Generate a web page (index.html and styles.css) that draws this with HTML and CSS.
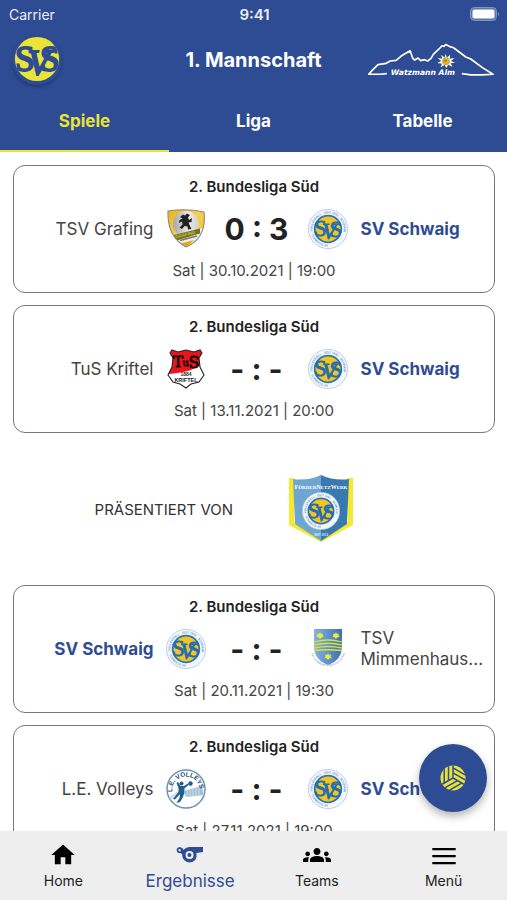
FILE: index.html
```html
<!DOCTYPE html>
<html lang="de">
<head>
<meta charset="utf-8">
<meta name="viewport" content="width=device-width, initial-scale=1">
<title>1. Mannschaft</title>
<link rel="stylesheet" href="styles.css">
</head>
<body>
<svg class="defs" aria-hidden="true">
  <defs>
    <path id="ring" d="M20 35.600A15.600 15.600 0 1 1 20.100 35.600"/>
    <path id="ring-low" d="M3 24A17.500 17.500 0 0 0 37 24"/>
    <path id="volley-arc" d="M6.300 23A13.800 13.800 0 1 1 33.700 23"/>
    <clipPath id="badge-clip"><circle cx="25" cy="25" r="23"/></clipPath>
    <clipPath id="core-clip"><circle cx="20" cy="20" r="14"/></clipPath>
    <clipPath id="ball-clip"><circle r="12.500"/></clipPath>
    <clipPath id="grafing-clip"><path d="M2 2Q20-1 38 3Q41 29 20 38Q1 28 2 2Z"/></clipPath>
    <clipPath id="kriftel-clip"><path d="M6 1L12 3L20 1L28 3L34 1L36 4L33 9L34 18L38 26L33 33L25 35L20 39L14 35L7 33L2 26L6 18L7 9L4 4Z"/></clipPath>
    <linearGradient id="gold" x2="1" y2="1"><stop offset="0" stop-color="#e8b017"/><stop offset=".45" stop-color="#f6d04a"/><stop offset="1" stop-color="#eec020"/></linearGradient>
    <linearGradient id="silver" x2="1"><stop offset="0" stop-color="#a3a6a5"/><stop offset=".6" stop-color="#ececea"/><stop offset="1" stop-color="#cfcfcb"/></linearGradient>
    <linearGradient id="azure" x2="1"><stop offset="0" stop-color="#86b1e3"/><stop offset=".55" stop-color="#5d8dcc"/><stop offset="1" stop-color="#3f6db0"/></linearGradient>
  </defs>
  <symbol id="schwaig" viewBox="0 0 40 40">
    <circle cx="20" cy="20" r="19.600" fill="#f4f8fc" stroke="#a9c5e3" stroke-width=".8"/>
    <text font-family="Liberation Sans" font-weight="700" font-size="3" fill="#5f93c9"><textPath href="#ring">SV SCHWAIG · VOLLEYBALL · SEIT 1961 · SCHWAIG ·</textPath></text>
    <circle cx="20" cy="20" r="13.300" fill="#f5c51c" stroke="#2b74b8" stroke-width="1.800"/>
    <g clip-path="url(#core-clip)" font-family="Liberation Serif" fill="#1f6db5" stroke="#1f6db5" stroke-width=".8">
      <text x="6" y="27" font-size="23">S</text>
      <text x="14" y="30" font-size="23" font-style="italic">V</text>
      <text x="21.500" y="28" font-size="23">S</text>
    </g>
  </symbol>
  <symbol id="grafing" viewBox="0 0 40 40">
    <g clip-path="url(#grafing-clip)">
      <rect width="40" height="40" fill="url(#gold)"/>
      <circle cx="20" cy="15" r="13" fill="url(#silver)"/>
      <path d="M4 30L40 18V40H4Z" fill="#f1f1ed"/>
      <path d="M8 26L34 19.500V24.500L9 32Z" fill="#71701b"/>
      <path d="M12 35L28 31L21 38Z" fill="#e2ad17"/>
      <path d="M14 31.500L31 27" stroke="#77776e" stroke-width="1.400"/>
    </g>
    <path d="M14 8L17 5.500L19 6.500L21 4.500L24 6L22 8.500L23 11L26 9L25.500 13L22.500 13.500L24 17L25.500 20L22 20.500L21.500 17.500L18.500 17L16 20L13.500 18.500L16.500 15.500L16 12.500L13 14L13.500 11L16.500 9.500Z" fill="#222"/>
    <text x="9.500" y="29.500" font-family="Liberation Sans" font-weight="700" font-size="4.500" fill="#c6bf4a" transform="rotate(-14 10 29)">GRAFING</text>
    <path d="M2 2Q20-1 38 3Q41 29 20 38Q1 28 2 2Z" fill="none" stroke="#8b8b80" stroke-width="1.100"/>
  </symbol>
  <symbol id="kriftel" viewBox="0 0 40 40">
    <g clip-path="url(#kriftel-clip)">
      <rect width="40" height="40" fill="#fff"/>
      <path d="M0 0H40V15Q32 17 27 20T3 25Z" fill="#e8151b"/>
    </g>
    <path d="M6 1L12 3L20 1L28 3L34 1L36 4L33 9L34 18L38 26L33 33L25 35L20 39L14 35L7 33L2 26L6 18L7 9L4 4Z" fill="none" stroke="#222" stroke-width="1.100"/>
    <g font-family="DejaVu Serif" fill="#170a0a" stroke="#170a0a" stroke-width=".8">
      <text x="7" y="18" font-size="15">T</text><text x="16.500" y="17" font-size="10">u</text><text x="22.500" y="19" font-size="16">S</text>
    </g>
    <g font-family="Liberation Sans" font-weight="700" fill="#222" text-anchor="middle"><text x="20" y="27" font-size="5">1884</text><text x="20" y="33" font-size="5.500">KRIFTEL</text></g>
  </symbol>
  <symbol id="mimmenhausen" viewBox="0 0 40 40">
    <text font-family="Liberation Sans" font-size="2.800" fill="#6d8fb8"><textPath href="#ring-low">TSV MIMMENHAUSEN VOLLEYBALL</textPath></text>
    <path d="M6 0H34V17Q34 31 20 36Q6 31 6 17Z" fill="url(#azure)"/>
    <path d="M6 13Q20 9 34 13M6 16Q20 12.500 34 16M6 19Q20 16 34 19M6 21.500Q20 20 34 21.500" fill="none" stroke="#d6e43c" stroke-width="1.300"/>
    <g fill="#f2ec2c"><path id="flower" d="M12 3L13 5L15 4.500L14.500 6.500L16 8L13.500 8.300L12 10L10.500 8.300L8.500 8L9.500 6.500L9 4.500L11 5Z"/><use href="#flower" x="16"/><use href="#flower" x="8" y="21"/></g>
  </symbol>
  <symbol id="volleys" viewBox="0 0 40 40">
    <circle cx="20" cy="20" r="19" fill="#fff" stroke="#6c93b1" stroke-width="1.500"/>
    <path d="M17 22L36 17L37.500 26L20 28Z" fill="#9fc0d6"/><path d="M3 28L12 22L14 24L5 31Z" fill="#cfdfeb"/>
    <path d="M21 21V28M24 20V27M27 19V27M30 19V27M33 18V26" stroke="#dceaf2" stroke-width=".8"/>
    <path d="M12 13L14.500 17L18 17L22 14.500L23 15.500L18.500 19.500L18 25L16.500 29L14 33L10.500 34L13.500 29L14 25L9 30.500L7 30L12.500 23V19L10.500 14Z" fill="#235d8b"/>
    <circle cx="15.500" cy="14.500" r="2" fill="#235d8b"/><circle cx="24.500" cy="14.500" r="2.200" fill="#235d8b"/>
    <text font-family="Liberation Sans" font-weight="700" font-size="6.400" fill="#1d4770"><textPath href="#volley-arc">L.E. VOLLEYS</textPath></text>
  </symbol>
</svg>

<header class="header">
  <div class="status"><span>Carrier</span><strong>9:41</strong>
    <svg class="battery" viewBox="0 0 30 14" aria-label="Akku"><rect x="0.500" y="0.500" width="26" height="13" rx="4" fill="#5b76b1" stroke="#8296c4"/><rect x="2.500" y="2.500" width="22" height="9" rx="2" fill="#fff"/><path d="M28 5Q30 7 28 9Z" fill="#8296c4"/></svg>
  </div>
  <div class="titlebar">
    <a class="club" href="#" aria-label="Verein">
      <svg viewBox="0 0 50 50">
        <circle cx="25" cy="25" r="23" fill="#e9e436"/>
        <g clip-path="url(#badge-clip)" font-family="Liberation Serif" fill="#2e4c93" stroke="#2e4c93" stroke-width="2">
          <text x="2" y="37" font-size="37">S</text>
          <text x="15" y="42" font-size="38" font-style="italic">V</text>
          <text x="28" y="38" font-size="37">S</text>
        </g>
      </svg>
    </a>
    <h1>1. Mannschaft</h1>
    <svg class="sponsor-logo" viewBox="342 125 386 108" role="img" aria-label="Watzmann Alm">
      <path d="M402 220L380 222L347 222L360 208L375 193L400 189L412 182L430 180L445 167L472 151L480 174L486 179L496 173L504 181L515 178L525 182L535 174L542 162L560 145L568 136L574 138L580 132L590 138L603 142L640 170L655 176L690 202L722 222L690 224L655 224L628 220" fill="none" stroke="#fff" stroke-width="5" stroke-linejoin="round"/>
      <path d="M579 160L583 172L593 163L591 175L606 173L595 182L608 187L594 189L600 200L587 193L581 203L576 194L564 201L568 190L554 188L566 182L555 173L569 175L566 163L576 172Z" fill="#fff"/>
      <circle cx="580" cy="183" r="12" fill="#d6b43c"/><circle cx="578" cy="181" r="4" fill="#a9882a"/>
      <text x="414" y="224" font-family="DejaVu Sans" font-size="23" font-weight="700" font-style="italic" fill="#fff">Watzmann Alm</text>
    </svg>
  </div>
  <nav class="tabs" aria-label="Ansicht">
    <a class="active" href="#">Spiele</a><a href="#">Liga</a><a href="#">Tabelle</a>
  </nav>
</header>

<main class="games">
  <article class="game">
    <h2>2. Bundesliga Süd</h2>
    <div class="match"><span class="team home">TSV Grafing</span><svg class="crest"><use href="#grafing"/></svg><span class="score">0 : 3</span><svg class="crest"><use href="#schwaig"/></svg><span class="team own">SV Schwaig</span></div>
    <p>Sat | 30.10.2021 | 19:00</p>
  </article>
  <article class="game">
    <h2>2. Bundesliga Süd</h2>
    <div class="match"><span class="team home">TuS Kriftel</span><svg class="crest"><use href="#kriftel"/></svg><span class="score">- : -</span><svg class="crest"><use href="#schwaig"/></svg><span class="team own">SV Schwaig</span></div>
    <p>Sat | 13.11.2021 | 20:00</p>
  </article>
  <section class="presented">
    <span>PRÄSENTIERT VON</span>
    <svg viewBox="0 0 66 68" role="img" aria-label="FörderNetzWerk">
      <path d="M1 3L6 3V47L33 64L60 47V3L65 3V50L33 67L1 50Z" fill="#f4e92b"/>
      <path d="M5 4Q20 6 33 0V66L7 49Z" fill="#6fa6d0"/><path d="M33 0Q46 6 61 4L59 49L33 66Z" fill="#3879b0"/>
      <text x="33" y="14" text-anchor="middle" font-family="Liberation Serif" font-weight="700" font-size="6" fill="#fff">F<tspan font-size="5">ÖRDER</tspan>N<tspan font-size="5">ETZ</tspan>W<tspan font-size="5">ERK</tspan></text>
      <use href="#schwaig" x="14" y="17" width="38" height="38"/>
      <text x="33" y="61" text-anchor="middle" font-family="Liberation Sans" font-weight="700" font-size="3" fill="#d8e7f3">SEIT 2012</text>
    </svg>
  </section>
  <article class="game">
    <h2>2. Bundesliga Süd</h2>
    <div class="match"><span class="team home own">SV Schwaig</span><svg class="crest"><use href="#schwaig"/></svg><span class="score">- : -</span><svg class="crest"><use href="#mimmenhausen"/></svg><span class="team">TSV Mimmenhaus...</span></div>
    <p>Sat | 20.11.2021 | 19:30</p>
  </article>
  <article class="game">
    <h2>2. Bundesliga Süd</h2>
    <div class="match"><span class="team home">L.E. Volleys</span><svg class="crest"><use href="#volleys"/></svg><span class="score">- : -</span><svg class="crest"><use href="#schwaig"/></svg><span class="team own">SV Schwaig</span></div>
    <p>Sat | 27.11.2021 | 19:00</p>
  </article>
</main>

<button class="fab" type="button" aria-label="Volleyball">
  <svg viewBox="-13 -13 26 26">
    <circle r="12.500" fill="#e9e436"/>
    <g clip-path="url(#ball-clip)" stroke="#2e4c93" stroke-width="1.500" fill="none">
      <g id="panel"><path d="M0 0V-13M-4.500 2.600V-13M-8.800 5V-13"/></g>
      <use href="#panel" transform="rotate(120)"/><use href="#panel" transform="rotate(240)"/>
    </g>
  </svg>
</button>

<nav class="bottom" aria-label="Hauptmenü">
  <a href="#"><svg viewBox="0 0 24 24"><path d="M10 20v-6h4v6h5v-8h3L12 3 2 12h3v8z"/></svg><span>Home</span></a>
  <a class="current" href="#"><svg viewBox="0 0 28 28"><path fill-rule="evenodd" d="M5 6.500A3 3 0 0 1 7.500 9Q10 6 14 6H27V11L20.500 12Q21.500 21 13.500 21.500Q6.500 21 6 13L4.500 12A3 3 0 1 1 5 6.500ZM3.500 8A1.200 1.200 0 1 0 3.600 10.400A1.200 1.200 0 0 0 3.500 8ZM13.500 10A4 4 0 1 0 13.600 18A4 4 0 0 0 13.500 10ZM13.500 12A2 2 0 1 1 13.400 16A2 2 0 0 1 13.500 12Z"/></svg><span>Ergebnisse</span></a>
  <a href="#"><svg class="wide" viewBox="0 0 24 24"><path d="M4 13c1.100 0 2-.9 2-2s-.9-2-2-2-2 .9-2 2 .9 2 2 2zm1.130 1.100c-.37-.06-.74-.1-1.130-.1-.99 0-1.930.21-2.780.58C.48 14.900 0 15.620 0 16.430V18h4.500v-1.610c0-.83.23-1.610.63-2.290zM20 13c1.100 0 2-.9 2-2s-.9-2-2-2-2 .9-2 2 .9 2 2 2zm4 3.430c0-.81-.48-1.530-1.220-1.850-.85-.37-1.790-.58-2.780-.58-.39 0-.76.04-1.130.1.400.68.630 1.460.630 2.290V18H24v-1.570zM16.240 13.650c-1.170-.52-2.610-.9-4.240-.9-1.630 0-3.070.39-4.240.9C6.680 14.130 6 15.210 6 16.390V18h12v-1.610c0-1.180-.68-2.260-1.760-2.740zM9 9c0 1.660 1.340 3 3 3s3-1.340 3-3-1.340-3-3-3-3 1.340-3 3z"/></svg><span>Teams</span></a>
  <a href="#"><svg viewBox="0 0 24 24"><path d="M2 6h20v2H2zM2 12h20v2H2zM2 18h20v2H2z"/></svg><span>Menü</span></a>
</nav>
</body>
</html>
```
FILE: styles.css
```css
* { box-sizing: border-box; }

body {
  margin: 0;
  height: 100vh;
  display: flex;
  flex-direction: column;
  overflow: hidden;
  background: #fff;
  color: #222;
  font-family: Inter, "Liberation Sans", sans-serif;
}

h1, h2, p { margin: 0; }
a { color: inherit; text-decoration: none; }
.defs { position: absolute; width: 0; height: 0; }

.header { background: #2e4c93; color: #fff; flex: none; }

.status {
  display: grid;
  grid-template-columns: 1fr auto 1fr;
  align-items: center;
  height: 28px;
  padding: 0 7px 0 9px;
  font-size: 14px;
  color: #e8edf7;
}
.status strong { font-size: 15px; font-weight: 600; }
.battery { width: 30px; height: 14px; justify-self: end; }

.titlebar {
  display: grid;
  grid-template-columns: 1fr auto 1fr;
  align-items: center;
  height: 64px;
  padding: 0 12px;
}
.titlebar h1 { font-size: 20px; font-weight: 700; line-height: 24px; }
.club {
  display: flex;
  justify-content: center;
  width: 50px;
  height: 50px;
  border-radius: 50%;
  box-shadow: 0 2px 3px #22397a;
}
.club svg { width: 48px; height: 48px; }
.sponsor-logo { width: 128px; height: 36px; justify-self: end; }

.tabs { display: grid; grid-template-columns: repeat(3, 1fr); height: 60px; }
.tabs a {
  display: flex;
  align-items: center;
  justify-content: center;
  border-bottom: 2px solid transparent;
  font-size: 17px;
  font-weight: 700;
}
.tabs .active { color: #e9e436; border-color: #e9e436; }

.games {
  flex: 1;
  min-height: 0;
  overflow: hidden;
  padding: 13px 12px 0 13px;
}
.game {
  height: 128px;
  margin-bottom: 12px;
  padding-top: 12px;
  border: 1px solid #777;
  border-radius: 12px;
  text-align: center;
}
.game h2 { font-size: 15px; font-weight: 600; line-height: 18px; }
.game p { font-size: 15px; line-height: 18px; color: #444; }
.match {
  display: grid;
  grid-template-columns: minmax(0, 1fr) 40px 102px 40px minmax(0, 1fr);
  align-items: center;
  height: 66px;
  padding: 0 14px 0 19px;
}
.team { padding-left: 13px; margin-right: -13px; text-align: left; font-size: 17px; line-height: 21px; color: #444; }
.team.home { padding: 0 12px 0 0; margin: 0 0 0 -13px; text-align: right; }
.team.own { font-weight: 700; color: #2e4c93; }
.crest { width: 40px; height: 40px; }
.score { font-size: 30px; font-weight: 700; white-space: nowrap; }

.presented {
  display: grid;
  grid-template-columns: 1fr 1fr;
  align-items: center;
  height: 128px;
  margin: 12px 0;
  color: #333;
  font-size: 15px;
}
.presented span { justify-self: end; padding-right: 21px; }
.presented svg { width: 66px; height: 68px; margin-left: 34px; }

.fab {
  position: fixed;
  right: 20px;
  bottom: 88px;
  display: grid;
  place-items: center;
  width: 68px;
  height: 68px;
  padding: 0;
  border: 0;
  border-radius: 50%;
  background: #2e4c93;
  box-shadow: 0 4px 8px rgba(0, 0, 0, 0.3);
}
.fab svg { width: 26px; height: 26px; }

.bottom {
  flex: none;
  display: grid;
  grid-template-columns: repeat(4, 1fr);
  height: 69px;
  background: #eee;
  color: #222;
  font-size: 14px;
}
.bottom a { display: flex; flex-direction: column; align-items: center; padding-top: 10px; }
.bottom svg { width: 28px; height: 28px; fill: #000; }
.bottom .wide { width: 30px; }
.bottom span { line-height: 24px; }
.bottom .current { color: #2e4c93; font-size: 17px; }
.bottom .current svg { fill: #2e4c93; }
```
